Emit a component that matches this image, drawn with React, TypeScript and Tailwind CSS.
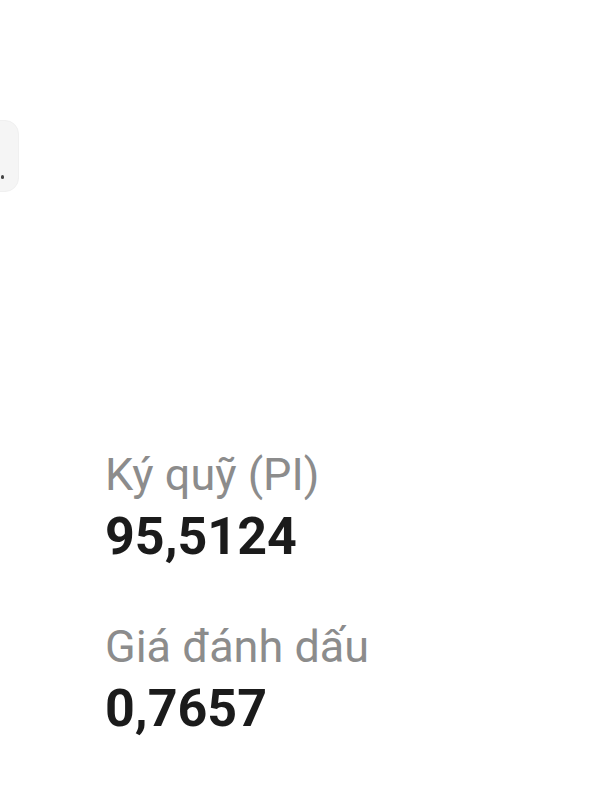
function InfoRow({ label, value }: { label: string; value: string }) {
  return (
    <div className="flex flex-col">
      <p className="text-[45px] leading-[58px] text-[#8c8c8c]">{label}</p>
      <p className="text-[52px] leading-[66px] font-bold text-[#1b1b1b]">{value}</p>
    </div>
  );
}

export default function App() {
  return (
    <div
      className="relative h-[800px] w-[600px] overflow-hidden bg-white"
      style={{ fontFamily: '"Roboto", "Noto Sans", sans-serif' }}
    >
      {/* Nút nổi bị khuất ở mép trái */}
      <div className="absolute -left-[50px] top-[120px] h-[72px] w-[69px] rounded-[14px] border border-[#f0f0f0] bg-[#f5f5f5]">
        <span className="absolute left-[50px] top-[54px] h-[4px] w-[3px] rounded-full bg-[#444]" />
      </div>

      <div className="flex flex-col gap-[48px] pl-[105px] pt-[446px]">
        <InfoRow label="Ký quỹ (PI)" value="95,5124" />
        <InfoRow label="Giá đánh dấu" value="0,7657" />
      </div>
    </div>
  );
}
